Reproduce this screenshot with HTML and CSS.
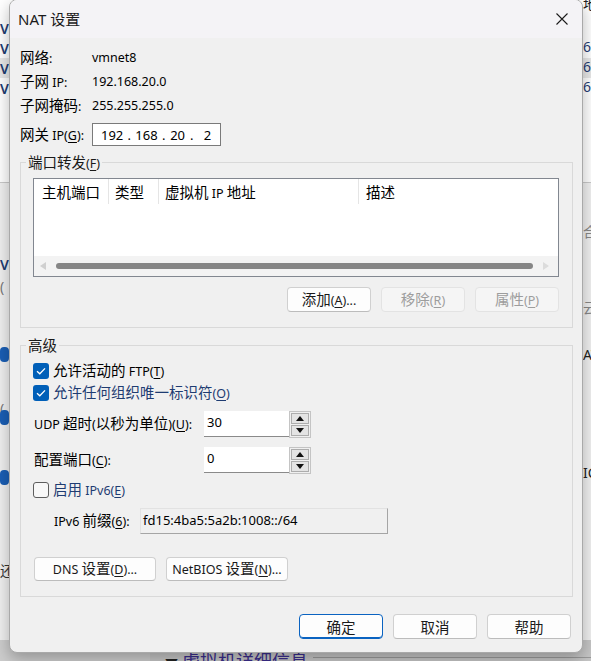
FILE: index.html
```html
<!DOCTYPE html>
<html lang="zh-CN">
<head>
<meta charset="utf-8">
<title>NAT 设置</title>
<link rel="stylesheet" href="styles.css">
</head>
<body>
<div class="backdrop">
  <div class="bg-top"></div>
  <div class="bg-row-hl"></div>
  <div class="bg-line l1"></div>
  <div class="bg-bottom"></div>
  <div class="frag fv v1">V</div>
  <div class="frag fv v2">V</div>
  <div class="frag fv v3">V</div>
  <div class="frag fv v4">V</div>
  <div class="frag fv v5">V</div>
  <div class="frag fp p1">(</div>
  <div class="frag fp p2">(</div>
  <div class="blob b1"></div>
  <div class="blob b2"></div>
  <div class="blob b3"></div>
  <div class="frag fz">还</div>
  <div class="frag fr r0">地</div>
  <div class="frag fr r1">68</div>
  <div class="frag fr r2">68</div>
  <div class="frag fr r3">68</div>
  <div class="frag fr r4">合</div>
  <div class="frag fr r5">云</div>
  <div class="frag fr r6">AT</div>
  <div class="frag fr r7">IC</div>
  <div class="bg-details"><span class="tri">▼</span> 虚拟机详细信息</div>
  <div class="bg-details-line"></div>
</div>

<div class="dialog">
  <div class="titlebar">
    <span class="title">NAT <span class="zh">设置</span></span>
    <svg class="close" width="12" height="12" viewBox="0 0 12 12"><path d="M0.5 0.5 L11.5 11.5 M11.5 0.5 L0.5 11.5" stroke="#1b1b1b" stroke-width="1.1" fill="none"/></svg>
  </div>

  <div class="content">
    <div class="info">
      <span><span class="zh">网络</span>:</span><span>vmnet8</span>
      <span><span class="zh">子网</span> IP:</span><span>192.168.20.0</span>
      <span><span class="zh">子网掩码</span>:</span><span>255.255.255.0</span>
    </div>
    <div class="gw-row">
      <span class="gw-label"><span class="zh">网关</span> IP(<u>G</u>):</span>
      <div class="ipbox"><span class="oct">192</span><span class="dot">.</span><span class="oct">168</span><span class="dot">.</span><span class="oct">20</span><span class="dot">.</span><span class="oct">2</span></div>
    </div>

    <div class="group g1">
      <span class="legend"><span class="zh">端口转发</span>(<u>F</u>)</span>
      <div class="listview">
        <div class="lv-head">
          <span class="col c1"><span class="zh">主机端口</span></span>
          <span class="col c2"><span class="zh">类型</span></span>
          <span class="col c3"><span class="zh">虚拟机</span> IP <span class="zh">地址</span></span>
          <span class="col c4"><span class="zh">描述</span></span>
        </div>
        <div class="lv-body"></div>
        <div class="hscroll">
          <span class="arr-l"></span>
          <span class="thumb"></span>
          <span class="arr-r"></span>
        </div>
      </div>
      <div class="btn-row">
        <span class="btn"><span><span class="zh">添加</span>(<u>A</u>)...</span></span>
        <span class="btn disabled"><span><span class="zh">移除</span>(<u>R</u>)</span></span>
        <span class="btn disabled"><span><span class="zh">属性</span>(<u>P</u>)</span></span>
      </div>
    </div>

    <div class="group g2">
      <span class="legend"><span class="zh">高级</span></span>
      <div class="cb-row">
        <span class="check on"><svg width="16" height="16" viewBox="0 0 16 16"><path d="M4 8.2 L6.8 10.8 L12 5.4" stroke="#fff" stroke-width="1.3" fill="none"/></svg></span>
        <span><span class="zh">允许活动的</span> FTP(<u>T</u>)</span>
      </div>
      <div class="cb-row r2">
        <span class="check on"><svg width="16" height="16" viewBox="0 0 16 16"><path d="M4 8.2 L6.8 10.8 L12 5.4" stroke="#fff" stroke-width="1.3" fill="none"/></svg></span>
        <span><span class="zh">允许任何组织唯一标识符</span>(<u>O</u>)</span>
      </div>
      <div class="field-row udp">
        <span class="f-label">UDP <span class="zh">超时</span>(<span class="zh">以秒为单位</span>)(<u>U</u>):</span>
        <span class="num">30</span>
        <span class="spin"><span class="sb up"><i></i></span><span class="sb down"><i></i></span></span>
      </div>
      <div class="field-row cfg">
        <span class="f-label"><span class="zh">配置端口</span>(<u>C</u>):</span>
        <span class="num">0</span>
        <span class="spin"><span class="sb up"><i></i></span><span class="sb down"><i></i></span></span>
      </div>
      <div class="cb-row r3">
        <span class="check off"></span>
        <span><span class="zh">启用</span> IPv6(<u>E</u>)</span>
      </div>
      <div class="field-row prefix">
        <span class="p-label">IPv6 <span class="zh">前缀</span>(<u>6</u>):</span>
        <span class="ro">fd15:4ba5:5a2b:1008::/64</span>
      </div>
      <div class="btn-row left">
        <span class="btn wide"><span>DNS <span class="zh">设置</span>(<u>D</u>)...</span></span>
        <span class="btn wide"><span>NetBIOS <span class="zh">设置</span>(<u>N</u>)...</span></span>
      </div>
    </div>

    <div class="footer">
      <span class="btn default"><span class="zh">确定</span></span>
      <span class="btn"><span class="zh">取消</span></span>
      <span class="btn"><span class="zh">帮助</span></span>
    </div>
  </div>
</div>
</body>
</html>
```

FILE: styles.css
```css
* { box-sizing: border-box; }
html, body { margin: 0; padding: 0; }
body {
  width: 591px;
  height: 661px;
  overflow: hidden;
  position: relative;
  background: #f0f0f0;
  font-family: "Noto Sans", "Noto Sans CJK SC", sans-serif;
  font-size: 12.5px;
  line-height: 18px;
  color: #000;
}
.zh { font-family: "Noto Sans CJK SC", sans-serif; font-size: 14.5px; }
u { text-decoration: underline; text-underline-offset: 2px; }

/* ---------- background window fragments ---------- */
.backdrop { position: absolute; inset: 0; }
.bg-top { position: absolute; left: 0; top: 0; width: 591px; height: 182px; background: #fff; }
.bg-row-hl { position: absolute; left: 0; top: 58px; width: 591px; height: 20px; background: #e8e8e8; }
.bg-line { position: absolute; left: 0; width: 591px; height: 1px; background: #c9c9c9; }
.bg-line.l1 { top: 182px; }
.bg-bottom { position: absolute; left: 0; top: 640px; width: 591px; height: 21px; background: #c6c6c6; border-left: 150px solid #cdcdcd; }
.frag { position: absolute; font-size: 14px; line-height: 16px; }
.fv { left: 0; color: #1e3c72; font-weight: 600; }
.v1 { top: 21px; } .v2 { top: 41px; } .v3 { top: 61px; } .v4 { top: 81px; } .v5 { top: 257px; }
.fp { left: 0; color: #777; }
.p1 { top: 279px; } .p2 { top: 401px; }
.blob { position: absolute; left: 0; width: 9px; height: 15px; border-radius: 4px; background: #1b5fb5; }
.b1 { top: 347px; } .b2 { top: 410px; } .b3 { top: 470px; }
.fz { left: 0; top: 563px; color: #333; }
.fr { left: 583px; color: #222; }
.r0 { top: -4px; } .r1 { top: 39px; color: #1e3c72; } .r2 { top: 59px; color: #1e3c72; } .r3 { top: 79px; color: #1e3c72; }
.r4 { top: 224px; color: #888; } .r5 { top: 300px; color: #888; } .r6 { top: 347px; } .r7 { top: 465px; }
.bg-details { position: absolute; left: 165px; top: 649px; font-family: "Noto Sans CJK SC", sans-serif; font-size: 18px; line-height: 22px; color: #3a2d8c; }
.bg-details .tri { font-size: 13px; color: #222; }
.bg-details-line { position: absolute; left: 313px; top: 657px; width: 278px; height: 1px; background: #9a9a9a; }

/* ---------- dialog ---------- */
.dialog {
  position: absolute;
  left: 9px;
  top: -1px;
  width: 574px;
  height: 654px;
  background: #f0f0f0;
  border: 1px solid #a9a9a9;
  border-radius: 8px;
  box-shadow: 0 6px 16px rgba(0, 0, 0, 0.28);
  overflow: hidden;
}
.titlebar {
  height: 38px;
  display: flex;
  align-items: center;
  justify-content: space-between;
  padding: 0 14px 0 8px;
  background: #f4f3f6;
}
.title { font-size: 15px; line-height: 20px; color: #1a1a1a; }
.title .zh { font-size: 15px; }
.close { display: block; }

.content { padding: 8px 9px 0 10px; }

.info {
  display: grid;
  grid-template-columns: 72px auto;
  grid-auto-rows: 24px;
  align-items: center;
}
.gw-row { display: flex; align-items: center; height: 23px; margin-top: 5px; }
.gw-label { width: 72px; }
.ipbox {
  width: 129px;
  height: 23px;
  background: #fff;
  border: 1px solid #7a7a7a;
  display: flex;
  align-items: center;
  padding-left: 8px;
  font-size: 13px;
}
.oct { display: inline-block; }
.dot { display: inline-block; width: 12px; text-align: center; }
.oct:nth-child(5) { width: 16px; text-align: center; }
.oct:nth-child(7) { margin-left: 6px; }

.group { position: relative; border: 1px solid #d9d9d9; }
.legend {
  position: absolute;
  top: -11px;
  left: 5px;
  padding: 0 2px;
  background: #f0f0f0;
  line-height: 20px;
  color: #1a1a1a;
}
.g1 { margin-top: 16px; height: 166px; padding: 15px 13px 15px 12px; }
.g2 { margin-top: 17px; height: 252px; padding: 15px 13px 15px 12px; }

.listview {
  height: 99px;
  border: 1px solid #828790;
  background: #fff;
  display: flex;
  flex-direction: column;
}
.lv-head { display: flex; height: 25px; }
.col { line-height: 25px; height: 25px; border-right: 1px solid #e5e5e5; white-space: nowrap; }
.c1 { width: 75px; padding-left: 8px; }
.c2 { width: 50px; padding-left: 6px; }
.c3 { width: 200px; padding-left: 6px; }
.c4 { flex: 1; padding-left: 7px; border-right: 0; }
.lv-body { flex: 1; }
.hscroll { height: 20px; background: #f3f3f3; display: flex; align-items: center; }
.arr-l {
  width: 0; height: 0;
  margin: 0 10px 0 6px;
  border-top: 4px solid transparent;
  border-bottom: 4px solid transparent;
  border-right: 6px solid #cfcfcf;
}
.thumb { width: 477px; height: 6px; border-radius: 3px; background: #868686; }
.arr-r {
  width: 0; height: 0;
  margin-left: 10px;
  border-top: 4px solid transparent;
  border-bottom: 4px solid transparent;
  border-left: 6px solid #dcdcdc;
}

.btn-row { display: flex; justify-content: flex-end; gap: 10px; margin-top: 10px; margin-right: 0; }
.btn {
  display: flex;
  align-items: center;
  justify-content: center;
  width: 84px;
  height: 25px;
  background: #fdfdfd;
  border: 1px solid #d0d0d0;
  border-bottom-color: #bcbcbc;
  border-radius: 4px;
  color: #1a1a1a;
  white-space: nowrap;
}
.btn.disabled { background: #f5f5f5; border-color: #e3e3e3; color: #9d9d9d; }
.btn-row.left { justify-content: flex-start; margin-top: 23px; padding-left: 1px; }
.btn.wide { width: 122px; height: 24px; }
.btn.default { border: 1px solid #0a63c1; box-shadow: inset 0 -1px 0 #0a63c1; }

.cb-row { display: flex; align-items: center; height: 20px; gap: 4px; white-space: nowrap; }
.cb-row.r2 { margin-top: 2px; }
.cb-row.r3 { margin-top: 7px; }
.check { width: 16px; height: 16px; border-radius: 3px; flex: none; }
.check svg { display: block; }
.check.on { background: #005fb8; }
.check.off { background: #f8f8f8; border: 1px solid #5e5e5e; }

.field-row { display: flex; align-items: center; height: 26px; white-space: nowrap; }
.field-row.udp { margin-top: 8px; }
.field-row.cfg { margin-top: 10px; }
.field-row.prefix { margin-top: 8px; padding-left: 21px; }
.f-label { width: 171px; padding-left: 1px; flex: none; }
.num {
  width: 85px;
  height: 26px;
  background: #fff;
  border-bottom: 1px solid #8a8a8a;
  padding: 1px 0 0 3px;
  line-height: 20px;
  font-size: 13px;
}
.spin {
  width: 22px;
  height: 27px;
  border: 1px solid #c4c4c4;
  padding: 1px;
  display: flex;
  flex-direction: column;
  gap: 1px;
  background: #f0f0f0;
  align-self: flex-start;
}
.sb {
  flex: 1;
  border: 1px solid #adadad;
  background: #e4e4e4;
  display: flex;
  align-items: center;
  justify-content: center;
}
.sb i { display: block; width: 0; height: 0; border-left: 4px solid transparent; border-right: 4px solid transparent; }
.sb.up i { border-bottom: 5px solid #111; }
.sb.down i { border-top: 5px solid #111; }
.p-label { width: 86px; flex: none; }
.ro {
  width: 248px;
  height: 26px;
  background: #f0f0f0;
  border: 1px solid #e2e2e2;
  border-right-color: #a5a5a5;
  border-bottom-color: #a5a5a5;
  padding: 1px 0 0 2px;
  line-height: 20px;
  font-size: 13px;
}

.footer { display: flex; justify-content: flex-end; gap: 10px; margin-top: 17px; margin-right: 2px; }
```
